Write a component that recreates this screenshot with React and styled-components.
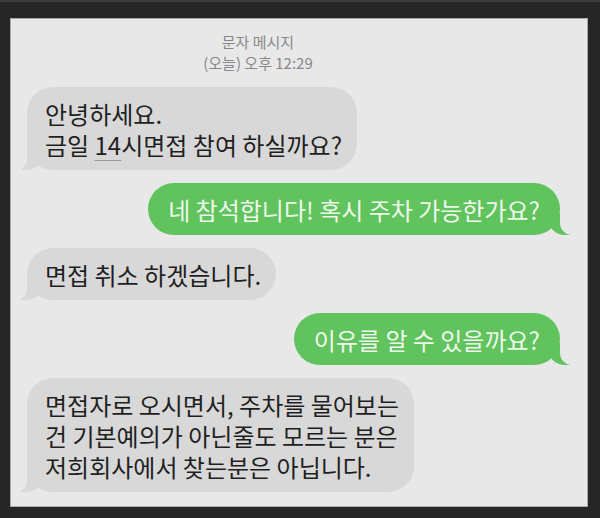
import React from 'react'
import styled, { createGlobalStyle, css } from 'styled-components'

const GlobalStyle = createGlobalStyle`
  html, body {
    margin: 0;
    padding: 0;
    background: #262626;
  }
  body {
    font-family: "Noto Sans CJK KR", "Noto Sans", sans-serif;
  }
`

const PANEL_BG = '#e8e8e8'
const GRAY = '#d8d8d8'
const GREEN = '#61c35d'

const messages = [
  { from: 'them', lines: [['안녕하세요.'], ['금일 ', { u: '14' }, '시면접 참여 하실까요?']] },
  { from: 'me', lines: [['네 참석합니다! 혹시 주차 가능한가요?']] },
  { from: 'them', lines: [['면접 취소 하겠습니다.']] },
  { from: 'me', lines: [['이유를 알 수 있을까요?']] },
  {
    from: 'them',
    lines: [
      ['면접자로 오시면서, 주차를 물어보는'],
      ['건 기본예의가 아닌줄도 모르는 분은'],
      ['저희회사에서 찾는분은 아닙니다.'],
    ],
  },
]

const App = () => {
  return (
    <>
      <GlobalStyle />
      <Page>
        <Panel>
          <Header>
            <div>문자 메시지</div>
            <div>(오늘) 오후 12:29</div>
          </Header>
          <Thread>
            {messages.map((m, i) => (
              <Bubble key={i} $me={m.from === 'me'}>
                {m.lines.map((line, j) => (
                  <Line key={j}>
                    {line.map((part, k) =>
                      typeof part === 'string' ? part : <Detected key={k}>{part.u}</Detected>
                    )}
                  </Line>
                ))}
              </Bubble>
            ))}
          </Thread>
        </Panel>
      </Page>
    </>
  )
}

export default App

const Page = styled.div`
  box-sizing: border-box;
  width: 600px;
  height: 518px;
  border-top: 2px solid #3a3a3a;
  padding: 16px 12px 11px 10px;
`

const Panel = styled.div`
  box-sizing: border-box;
  height: 489px;
  background: ${PANEL_BG};
  border: 1px solid #a9a9a9;
  overflow: hidden;
`

const Header = styled.div`
  width: 494px;
  padding-top: 12px;
  text-align: center;
  font-size: 15px;
  line-height: 21px;
  color: #888888;
`

const Thread = styled.div`
  display: flex;
  flex-direction: column;
  gap: 13px;
  padding: 14px 27px 0 16px;
`

const Bubble = styled.div`
  position: relative;
  box-sizing: border-box;
  padding: 10.5px 15px 10.5px 18px;
  border-radius: 26px;
  font-size: 24px;
  line-height: 31px;
  align-self: flex-start;
  background: ${GRAY};
  color: #1f1f1f;

  &::before,
  &::after {
    content: "";
    position: absolute;
    bottom: 0;
  }

  &::before {
    left: -6px;
    width: 22px;
    height: 22px;
    background: ${GRAY};
    border-bottom-right-radius: 17px 16px;
  }

  &::after {
    left: -12px;
    width: 12px;
    height: 22px;
    background: ${PANEL_BG};
    border-bottom-right-radius: 11px;
  }

  ${(p) =>
    p.$me &&
    css`
      align-self: flex-end;
      padding: 10.5px 20px 10.5px 20px;
      background: ${GREEN};
      color: #eef8ec;

      &::before {
        left: auto;
        right: -10px;
        background: ${GREEN};
        border-bottom-right-radius: 0;
        border-bottom-left-radius: 17px 16px;
      }

      &::after {
        left: auto;
        right: -14px;
        width: 14px;
        border-bottom-right-radius: 0;
        border-bottom-left-radius: 12px;
      }
    `}
`

const Line = styled.div`
  position: relative;
  z-index: 1;
  white-space: nowrap;
`

const Detected = styled.span`
  text-decoration: underline;
  text-decoration-color: #9a9a9a;
  text-decoration-thickness: 1px;
  text-underline-offset: 5px;
`
